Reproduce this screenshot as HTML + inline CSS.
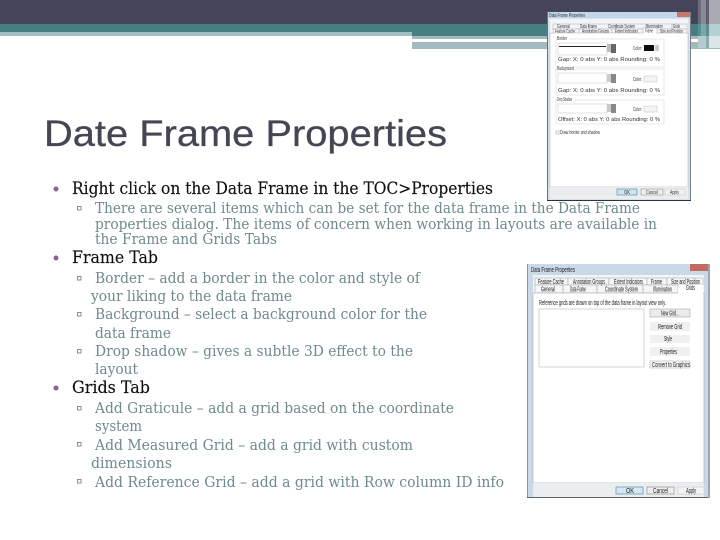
<!DOCTYPE html>
<html><head><meta charset="utf-8"><style>
html,body{margin:0;padding:0;background:#fff;width:720px;height:540px;overflow:hidden}
svg{display:block}
.m{font-family:"DejaVu Serif","Liberation Serif",serif;font-size:16.5px;fill:#111}
.s{font-family:"DejaVu Serif","Liberation Serif",serif;font-size:15px;fill:#6f8a8a}
.d{font-family:"Liberation Sans",sans-serif;font-size:5px;fill:#333}
.e{font-family:"Liberation Sans",sans-serif;font-size:7px;fill:#222}
</style></head><body>
<svg width="720" height="540" viewBox="0 0 720 540" xmlns="http://www.w3.org/2000/svg">
<defs><filter id="b" x="-5%" y="-5%" width="110%" height="110%"><feGaussianBlur stdDeviation="0.35"/></filter></defs>
<rect width="720" height="540" fill="#fff"/>
<rect width="720" height="24" fill="#444558"/>
<rect y="24" width="720" height="8" fill="#457e83"/>
<rect y="32" width="412" height="4" fill="#a3bfc1"/>
<rect x="412" y="32" width="308" height="4" fill="#457e83"/>
<rect x="412" y="36" width="308" height="3" fill="#a3b9bb"/>
<rect x="412" y="42" width="308" height="7" fill="#a3b9bb"/>
<g>
<rect x="698" width="3" height="24" fill="#6b6c7c"/><rect x="701" width="5" height="24" fill="#888a98"/><rect x="706" width="3" height="24" fill="#5d5e70"/><rect x="709" width="11" height="24" fill="#a9aab4"/>
<rect x="698" y="24" width="3" height="12" fill="#5a9094"/><rect x="701" y="24" width="5" height="12" fill="#7aa7aa"/><rect x="706" y="24" width="3" height="12" fill="#5d8f92"/><rect x="709" y="24" width="11" height="12" fill="#b3d0d2"/>
<rect x="698" y="36" width="8" height="12" fill="#b4cccd"/><rect x="706" y="36" width="3" height="12" fill="#8fabae"/><rect x="709" y="36" width="11" height="12" fill="#dbe7e7"/>
</g>

<text x="44" y="146" font-family="Liberation Sans,sans-serif" font-size="37" fill="#444653" stroke="#444653" stroke-width=".3" textLength="403" lengthAdjust="spacingAndGlyphs">Date Frame Properties</text>

<g fill="#8a5f96"><circle cx="56" cy="189" r="2.5"/><circle cx="56" cy="258" r="2.5"/><circle cx="56" cy="388" r="2.5"/></g>
<g fill="none" stroke="#7a9393" stroke-width="1">
<rect x="77.5" y="206.500" width="3.5" height="3.5"/><rect x="77.5" y="276.5" width="3.5" height="3.5"/><rect x="77.5" y="312.5" width="3.5" height="3.5"/><rect x="77.5" y="349.5" width="3.5" height="3.5"/><rect x="77.5" y="406.5" width="3.5" height="3.5"/><rect x="77.5" y="442.5" width="3.5" height="3.5"/><rect x="77.5" y="479.5" width="3.5" height="3.5"/>
</g>

<g stroke="#111" stroke-width=".15">
<text class="m" x="72" y="194" textLength="421" lengthAdjust="spacingAndGlyphs">Right click on the Data Frame in the TOC&gt;Properties</text>
<text class="m" x="72" y="263" textLength="86" lengthAdjust="spacingAndGlyphs">Frame Tab</text>
<text class="m" x="72" y="393" textLength="78" lengthAdjust="spacingAndGlyphs">Grids Tab</text>
</g>
<text class="s" x="95" y="213" textLength="545" lengthAdjust="spacingAndGlyphs">There are several items which can be set for the data frame in the Data Frame</text>
<text class="s" x="95" y="229" textLength="562" lengthAdjust="spacingAndGlyphs">properties dialog. The items of concern when working in layouts are available in</text>
<text class="s" x="95" y="244" textLength="182" lengthAdjust="spacingAndGlyphs">the Frame and Grids Tabs</text>
<text class="s" x="95" y="283" textLength="325" lengthAdjust="spacingAndGlyphs">Border – add a border in the color and style of</text>
<text class="s" x="91" y="301" textLength="201" lengthAdjust="spacingAndGlyphs">your liking to the data frame</text>
<text class="s" x="95" y="319" textLength="332" lengthAdjust="spacingAndGlyphs">Background – select a background color for the</text>
<text class="s" x="95" y="338" textLength="76" lengthAdjust="spacingAndGlyphs">data frame</text>
<text class="s" x="95" y="356" textLength="318" lengthAdjust="spacingAndGlyphs">Drop shadow – gives a subtle 3D effect to the</text>
<text class="s" x="95" y="374" textLength="43" lengthAdjust="spacingAndGlyphs">layout</text>
<text class="s" x="95" y="413" textLength="359" lengthAdjust="spacingAndGlyphs">Add Graticule – add a grid based on the coordinate</text>
<text class="s" x="95" y="431" textLength="47" lengthAdjust="spacingAndGlyphs">system</text>
<text class="s" x="95" y="450" textLength="318" lengthAdjust="spacingAndGlyphs">Add Measured Grid – add a grid with custom</text>
<text class="s" x="91" y="468" textLength="81" lengthAdjust="spacingAndGlyphs">dimensions</text>
<text class="s" x="95" y="487" textLength="409" lengthAdjust="spacingAndGlyphs">Add Reference Grid – add a grid with Row column ID info</text>

<!-- small dialog -->
<g filter="url(#b)">
<rect x="548" y="12" width="142" height="188" fill="#d4e2ee"/>
<rect x="548" y="12" width="142" height="6" fill="#c3d7ea"/>
<rect x="677" y="12" width="13" height="5" fill="#c8746c"/>
<text class="d" x="549" y="17" textLength="36" lengthAdjust="spacingAndGlyphs">Data Frame Properties</text>
<rect x="550" y="19" width="138" height="168" fill="#f3f4f5"/>
<g stroke="#aab" stroke-width=".5" fill="#f5f5f5">
<rect x="553" y="24" width="36" height="5"/><rect x="589" y="24" width="27" height="5"/><rect x="616" y="24" width="30" height="5"/><rect x="646" y="24" width="26" height="5"/><rect x="672" y="24" width="15" height="5"/>
<rect x="553" y="29" width="36" height="5"/><rect x="579" y="29" width="33" height="5"/><rect x="612" y="29" width="31" height="5"/><rect x="661" y="29" width="26" height="5"/>
</g>
<text class="d" x="557" y="28" textLength="13" lengthAdjust="spacingAndGlyphs">General</text><text class="d" x="580" y="28" textLength="17" lengthAdjust="spacingAndGlyphs">Data Frame</text><text class="d" x="608" y="28" textLength="27" lengthAdjust="spacingAndGlyphs">Coordinate System</text><text class="d" x="646" y="28" textLength="17" lengthAdjust="spacingAndGlyphs">Illumination</text><text class="d" x="673" y="28" textLength="7" lengthAdjust="spacingAndGlyphs">Grids</text>
<text class="d" x="555" y="33" textLength="20" lengthAdjust="spacingAndGlyphs">Feature Cache</text><text class="d" x="582" y="33" textLength="27" lengthAdjust="spacingAndGlyphs">Annotation Groups</text><text class="d" x="615" y="33" textLength="23" lengthAdjust="spacingAndGlyphs">Extent Indicators</text><text class="d" x="660" y="33" textLength="23" lengthAdjust="spacingAndGlyphs">Size and Position</text>
<rect x="550" y="33" width="138" height="154" fill="#fff" stroke="#b5bcc4" stroke-width=".6"/>
<rect x="643" y="28" width="14" height="6" fill="#fff" stroke="#aab" stroke-width=".5"/>
<rect x="643.300" y="33" width="13.400" height="1.500" fill="#fff"/>
<text class="d" x="645" y="32.500" textLength="8" lengthAdjust="spacingAndGlyphs">Frame</text>
<g fill="none" stroke="#dedede" stroke-width=".7">
<rect x="556" y="39" width="108" height="28"/><rect x="556" y="69" width="108" height="26"/><rect x="556" y="100" width="108" height="24"/>
</g>
<rect x="557" y="36" width="12" height="4" fill="#fff"/><rect x="557" y="66" width="18" height="4" fill="#fff"/><rect x="557" y="97" width="16" height="4" fill="#fff"/>
<text class="d" x="557" y="40" textLength="10" lengthAdjust="spacingAndGlyphs">Border</text><text class="d" x="557" y="70" textLength="17" lengthAdjust="spacingAndGlyphs" fill="#666">Background</text><text class="d" x="557" y="101" textLength="15" lengthAdjust="spacingAndGlyphs" fill="#666">Drop Shadow</text>
<rect x="558" y="43" width="49" height="12" fill="#fff" stroke="#ccc" stroke-width=".6"/>
<rect x="558" y="73" width="49" height="10" fill="#fff" stroke="#ccc" stroke-width=".6"/>
<rect x="558" y="104" width="49" height="9" fill="#fff" stroke="#ccc" stroke-width=".6"/>
<line x1="559" y1="46.500" x2="606" y2="46.500" stroke="#222" stroke-width="1"/>
<rect x="607" y="44" width="4" height="8" fill="#bbb"/><rect x="611" y="44" width="5" height="9" fill="#666"/>
<rect x="607" y="74" width="4" height="8" fill="#ccc"/><rect x="611" y="74" width="5" height="9" fill="#888"/>
<rect x="607" y="104" width="4" height="8" fill="#ccc"/><rect x="611" y="104" width="5" height="9" fill="#888"/>
<rect x="644" y="45" width="10" height="6" fill="#111"/><rect x="655" y="45" width="4" height="6" fill="#ccc"/>
<rect x="644" y="76" width="13" height="6" fill="#f4f4f4" stroke="#ccc" stroke-width=".6"/>
<rect x="644" y="106" width="13" height="6" fill="#f4f4f4" stroke="#ccc" stroke-width=".6"/>
<text class="d" x="633" y="50" textLength="9" lengthAdjust="spacingAndGlyphs">Color:</text><text class="d" x="633" y="81" textLength="9" lengthAdjust="spacingAndGlyphs" fill="#888">Color:</text><text class="d" x="633" y="111" textLength="9" lengthAdjust="spacingAndGlyphs" fill="#888">Color:</text>
<text class="d" x="558" y="61" textLength="102" lengthAdjust="spacingAndGlyphs">Gap:  X:   0   abs  Y:   0   abs  Rounding:   0   %</text>
<text class="d" x="558" y="92" textLength="102" lengthAdjust="spacingAndGlyphs" fill="#888">Gap:  X:   0   abs  Y:   0   abs  Rounding:   0   %</text>
<text class="d" x="558" y="121" textLength="102" lengthAdjust="spacingAndGlyphs" fill="#888">Offset:  X:   0   abs  Y:   0   abs  Rounding:   0   %</text>
<rect x="556" y="131" width="3" height="3" fill="#fff" stroke="#999" stroke-width=".5"/>
<text class="d" x="560" y="134" textLength="40" lengthAdjust="spacingAndGlyphs">Draw border and shadow</text>
<rect x="550" y="187" width="138" height="12" fill="#ecedee"/>
<rect x="617" y="189" width="20" height="6" fill="#cde3f0" stroke="#5f8fb0" stroke-width=".7"/>
<rect x="641" y="189" width="22" height="6" fill="#eee" stroke="#999" stroke-width=".6"/>
<rect x="665" y="189" width="20" height="6" fill="#f2f2f2" stroke="#ccc" stroke-width=".6"/>
<text class="d" x="624" y="194" textLength="6" lengthAdjust="spacingAndGlyphs">OK</text><text class="d" x="646" y="194" textLength="12" lengthAdjust="spacingAndGlyphs">Cancel</text><text class="d" x="670" y="194" textLength="9" lengthAdjust="spacingAndGlyphs" fill="#aaa">Apply</text>
</g>
<rect x="547" y="12" width="1" height="189" fill="#6a7078"/>
<rect x="690" y="12" width="1" height="189" fill="#7a808a"/>
<rect x="547" y="200" width="144" height="1" fill="#2f3238"/>

<!-- large dialog -->
<g filter="url(#b)">
<rect x="528" y="264" width="180" height="233" fill="#c9d9e8"/>
<rect x="690" y="264" width="18" height="7" fill="#c46a62"/>
<text class="e" x="531" y="272" textLength="44" lengthAdjust="spacingAndGlyphs">Data Frame Properties</text>
<rect x="533" y="275" width="171" height="209" fill="#f3f4f5"/>
<g stroke="#a8aeb5" stroke-width=".6" fill="#f6f6f6">
<rect x="535" y="278" width="33" height="7"/><rect x="568" y="278" width="41" height="7"/><rect x="609" y="278" width="38" height="7"/><rect x="647" y="278" width="20" height="7"/><rect x="667" y="278" width="36" height="7"/>
<rect x="535" y="285" width="28" height="8"/><rect x="563" y="285" width="34" height="8"/><rect x="597" y="285" width="46" height="8"/><rect x="643" y="285" width="35" height="8"/>
</g>
<text class="e" x="538" y="284" textLength="26" lengthAdjust="spacingAndGlyphs">Feature Cache</text><text class="e" x="573" y="284" textLength="32" lengthAdjust="spacingAndGlyphs">Annotation Groups</text><text class="e" x="614" y="284" textLength="29" lengthAdjust="spacingAndGlyphs">Extent Indicators</text><text class="e" x="651" y="284" textLength="11" lengthAdjust="spacingAndGlyphs">Frame</text><text class="e" x="671" y="284" textLength="29" lengthAdjust="spacingAndGlyphs">Size and Position</text>
<text class="e" x="541" y="291.500" textLength="14" lengthAdjust="spacingAndGlyphs">General</text><text class="e" x="570" y="291.500" textLength="16" lengthAdjust="spacingAndGlyphs">Data Frame</text><text class="e" x="605" y="291.500" textLength="33" lengthAdjust="spacingAndGlyphs">Coordinate System</text><text class="e" x="653" y="291.500" textLength="19" lengthAdjust="spacingAndGlyphs">Illumination</text>
<rect x="533" y="293" width="171" height="190" fill="#fff" stroke="#aeb5bc" stroke-width=".7"/>
<rect x="678" y="285" width="25" height="8.500" fill="#fff"/>
<text class="e" x="686" y="290" textLength="9" lengthAdjust="spacingAndGlyphs">Grids</text>
<text class="e" x="539" y="305" textLength="127" lengthAdjust="spacingAndGlyphs">Reference grids are drawn on top of the data frame in layout view only.</text>
<rect x="539" y="309" width="105" height="58" fill="#fff" stroke="#c4c4c4" stroke-width=".7"/>
<rect x="650" y="309" width="40" height="8" fill="#ececec" stroke="#999" stroke-width=".5"/>
<rect x="650" y="322" width="40" height="9" fill="#f0f0f0"/>
<rect x="650" y="335" width="40" height="8" fill="#f0f0f0"/>
<rect x="650" y="347" width="40" height="9" fill="#f0f0f0"/>
<rect x="650" y="361" width="40" height="7" fill="#f4f4f4" stroke="#aaa" stroke-width=".5"/>
<text class="e" x="661" y="315.500" textLength="18" lengthAdjust="spacingAndGlyphs">New Grid...</text>
<text class="e" x="658" y="329" textLength="24" lengthAdjust="spacingAndGlyphs" fill="#888">Remove Grid</text>
<text class="e" x="664" y="341" textLength="8" lengthAdjust="spacingAndGlyphs" fill="#888">Style</text>
<text class="e" x="660" y="354" textLength="17" lengthAdjust="spacingAndGlyphs" fill="#777">Properties</text>
<text class="e" x="652" y="367" textLength="38" lengthAdjust="spacingAndGlyphs" fill="#777">Convert to Graphics</text>
<rect x="533" y="483" width="171" height="14" fill="#ecedee"/>
<rect x="616" y="487" width="27" height="7" fill="#d5e7f3" stroke="#5f8fb0" stroke-width=".7"/>
<rect x="647" y="487" width="27" height="7" fill="#eee" stroke="#888" stroke-width=".6"/>
<rect x="678" y="487" width="26" height="7" fill="#f3f3f3" stroke="#ccc" stroke-width=".6"/>
<text class="e" x="626" y="493" textLength="8" lengthAdjust="spacingAndGlyphs">OK</text><text class="e" x="653" y="493" textLength="15" lengthAdjust="spacingAndGlyphs">Cancel</text><text class="e" x="686" y="493" textLength="10" lengthAdjust="spacingAndGlyphs" fill="#aaa">Apply</text>
</g>
<rect x="527" y="264" width="1" height="234" fill="#8a929a"/>
<rect x="527" y="497" width="183" height="1" fill="#5d6269"/>
<rect x="708" y="264" width="2" height="234" fill="#9aa6b0"/>
</svg>
</body></html>
